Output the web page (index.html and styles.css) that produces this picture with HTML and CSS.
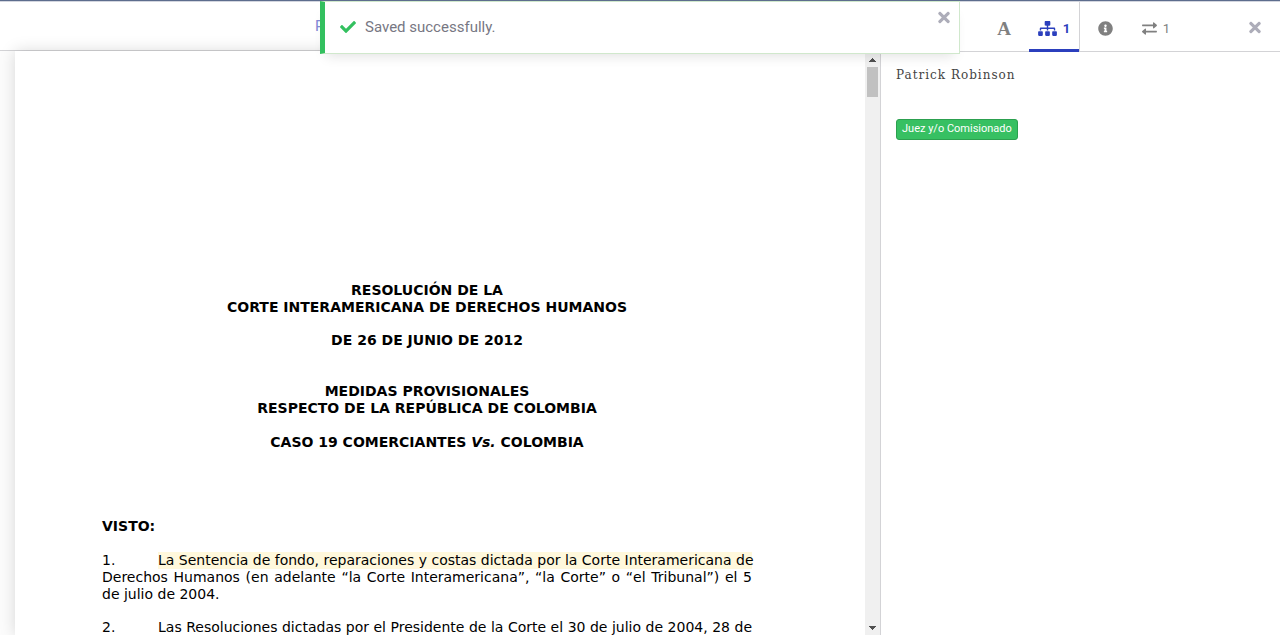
FILE: index.html
```
<!DOCTYPE html>
<html lang="es">
<head>
<meta charset="utf-8">
<title>Documento</title>
<link rel="stylesheet" href="styles.css">
</head>
<body>
<div class="app">
  <div class="topbar"></div>
  <div class="viewer">
    <section class="main">
      <header class="main-header"><a class="main-link" href="#">P</a></header>
      <div class="scroller">
        <article class="page">
          <h1 class="title">RESOLUCIÓN DE LA<br>CORTE INTERAMERICANA DE DERECHOS HUMANOS</h1>
          <p class="date">DE 26 DE JUNIO DE 2012</p>
          <h2 class="subject">MEDIDAS PROVISIONALES<br>RESPECTO DE LA REPÚBLICA DE COLOMBIA</h2>
          <p class="case">CASO 19 COMERCIANTES <em>Vs.</em> COLOMBIA</p>
          <h3 class="section">VISTO:</h3>
          <p class="para">
            <span class="line first"><span class="num">1.</span><mark class="ref">La Sentencia de fondo, reparaciones y costas dictada por la Corte Interamericana de</mark></span>
            <span class="line">Derechos Humanos (en adelante “la Corte Interamericana”, “la Corte” o “el Tribunal”) el 5</span>
            <span class="line last">de julio de 2004.</span>
          </p>
          <p class="para">
            <span class="line first"><span class="num">2.</span><span class="fill">Las Resoluciones dictadas por el Presidente de la Corte el 30 de julio de 2004, 28 de</span></span>
          </p>
        </article>
        <div class="scrollbar" aria-hidden="true">
          <svg class="arrow" viewBox="0 0 15 13"><path d="M4 9h7v-1h-1v-1h-1v-1h-1v-1h-1v1h-1v1h-1v1h-1z"/></svg>
          <div class="thumb"></div>
          <div class="track"></div>
          <svg class="arrow" viewBox="0 0 15 13"><path d="M4 4h7v1h-1v1h-1v1h-1v1h-1v-1h-1v-1h-1v-1h-1z"/></svg>
        </div>
      </div>
    </section>
    <aside class="side">
      <nav class="tabs">
        <button class="tab letter" type="button">A</button>
        <button class="tab active" type="button" aria-label="Conexiones 1">
          <svg width="19" height="15" viewBox="0 0 640 512" fill="currentColor"><path d="M128 352H32c-17.700 0-32 14.300-32 32v96c0 17.700 14.300 32 32 32h96c17.700 0 32-14.300 32-32v-96c0-17.700-14.300-32-32-32zm-24-80h192v48h48v-48h192v48h48v-57.600c0-21.200-17.200-38.400-38.400-38.400H344v-64h40c17.700 0 32-14.300 32-32V32c0-17.700-14.300-32-32-32H256c-17.700 0-32 14.300-32 32v96c0 17.700 14.300 32 32 32h40v64H94.400C73.200 224 56 241.200 56 262.400V320h48v-48zm264 80h-96c-17.700 0-32 14.300-32 32v96c0 17.700 14.300 32 32 32h96c17.700 0 32-14.300 32-32v-96c0-17.700-14.300-32-32-32zm240 0h-96c-17.700 0-32 14.300-32 32v96c0 17.700 14.300 32 32 32h96c17.700 0 32-14.300 32-32v-96c0-17.700-14.300-32-32-32z"/></svg>
          <span>1</span>
        </button>
        <button class="tab info" type="button" aria-label="Información">
          <svg width="15" height="15" viewBox="0 0 512 512" fill="currentColor"><path d="M256 8C119 8 8 119 8 256s111 248 248 248 248-111 248-248S393 8 256 8zm0 110c23 0 42 19 42 42s-19 42-42 42-42-19-42-42 19-42 42-42zm56 254c0 7-5 12-12 12h-88c-7 0-12-5-12-12v-24c0-7 5-12 12-12h12v-64h-12c-7 0-12-5-12-12v-24c0-7 5-12 12-12h64c7 0 12 5 12 12v100h12c7 0 12 5 12 12v24z"/></svg>
        </button>
        <button class="tab relations" type="button" aria-label="Relaciones 1">
          <svg width="15" height="13" viewBox="0 0 15 13" fill="currentColor"><path d="M.5 2.500H11V1c0-.7.600-.9 1-.5l2.700 2.300c.4.400.4.700 0 1.100L12 6.200c-.4.400-1 .2-1-.5V4.300H.5C-.1 4.300-.1 2.500.5 2.500zM14.500 8.700H4V7.300c0-.7-.6-.9-1-.5L.3 9.100c-.4.400-.4.700 0 1.100L3 12.500c.4.400 1 .2 1-.5v-1.500h10.500c.6 0 .6-1.800 0-1.800z"/></svg>
          <span>1</span>
        </button>
        <button class="close" type="button" aria-label="Cerrar">
          <svg width="12" height="17" viewBox="0 0 352 512" fill="currentColor"><path d="M242.700 256l100.100-100.100c12.300-12.300 12.300-32.200 0-44.500l-22.200-22.200c-12.300-12.300-32.200-12.300-44.500 0L176 189.300 75.900 89.200c-12.300-12.300-32.200-12.300-44.500 0L9.200 111.400c-12.300 12.300-12.300 32.200 0 44.500L109.300 256 9.200 356.100c-12.300 12.300-12.300 32.200 0 44.500l22.200 22.200c12.300 12.300 32.200 12.300 44.500 0L176 322.700l100.100 100.100c12.300 12.300 32.200 12.300 44.500 0l22.200-22.200c12.300-12.300 12.300-32.200 0-44.500z"/></svg>
        </button>
      </nav>
      <div class="item">
        <div class="item-name">Patrick Robinson</div>
        <span class="badge">Juez y/o Comisionado</span>
      </div>
    </aside>
  </div>
  <div class="toast" role="status">
    <svg width="16" height="16" viewBox="0 0 512 512" fill="#33c05f"><path d="M173.900 439.400L7.500 273c-10-10-10-26.200 0-36.200l36.200-36.200c10-10 26.200-10 36.200 0L192 312.700 432.100 72.600c10-10 26.200-10 36.200 0l36.200 36.200c10 10 10 26.200 0 36.200L210.100 439.400c-10 10-26.200 10-36.200 0z"/></svg>
    <span class="toast-text">Saved successfully.</span>
    <button class="toast-close" type="button" aria-label="Close">
      <svg width="12" height="17" viewBox="0 0 352 512" fill="currentColor"><path d="M242.700 256l100.100-100.100c12.300-12.300 12.300-32.200 0-44.500l-22.200-22.200c-12.300-12.300-32.200-12.300-44.500 0L176 189.300 75.900 89.200c-12.300-12.300-32.200-12.300-44.500 0L9.200 111.400c-12.300 12.300-12.300 32.200 0 44.500L109.300 256 9.200 356.100c-12.300 12.300-12.300 32.200 0 44.500l22.200 22.200c12.300 12.300 32.200 12.300 44.500 0L176 322.700l100.100 100.100c12.300 12.300 32.200 12.300 44.500 0l22.200-22.200c12.300-12.300 12.300-32.200 0-44.500z"/></svg>
    </button>
  </div>
</div>
</body>
</html>
```
FILE: styles.css
```
* { box-sizing: border-box; }
body { margin: 0; font-family: Roboto, "Liberation Sans", sans-serif; background: #fff; }
button { border: 0; background: none; padding: 0; font: inherit; color: inherit; cursor: pointer; }
svg { display: block; flex: none; }

.app { height: 100vh; display: flex; flex-direction: column; position: relative; overflow: hidden; }
.topbar { flex: none; height: 2px; background: #5d6d8d; border-bottom: 1px solid #d3d6df; }
.viewer { flex: 1; min-height: 0; display: flex; }

.main { flex: 1; min-width: 0; display: flex; flex-direction: column; }
.main-header { flex: none; height: 49px; padding-left: 315px; display: flex; align-items: center; border-bottom: 1px solid #d3d3d6; }
.main-link { font-size: 15px; color: #8389d6; text-decoration: none; }
.scroller { flex: 1; min-height: 0; display: flex; background: #fcfcfc; padding-left: 15px; }
.page { flex: 1; min-width: 0; overflow: hidden; background: #fff; box-shadow: 0 0 15px rgba(0, 0, 0, .15); padding: 231px 113px 0 87px; font: 14px/17px Verdana, "DejaVu Sans", sans-serif; color: #000; }
.page h1, .page h2, .page h3, .page p { margin: 0; font-size: 14px; }
.title, .subject, .date, .case { text-align: center; font-weight: bold; }
.page .date { margin-top: 16px; }
.page .subject { margin-top: 34px; }
.page .case { margin-top: 17px; }
.page .section { margin-top: 67px; }
.page .para { margin-top: 17px; }
.page .para + .para { margin-top: 16px; }
.line { display: block; text-align-last: justify; white-space: nowrap; }
.line.last { text-align-last: left; }
.line.first { display: flex; }
.num { flex: none; width: 56px; text-align-last: left; }
.ref, .fill { flex: 1; min-width: 0; color: inherit; }
.ref { background: #fff8dc; }

.scrollbar { flex: none; width: 15px; display: flex; flex-direction: column; background: #f0f0f0; z-index: 1; padding-top: 2px; }
.arrow { width: 15px; height: 13px; fill: #505050; }
.thumb { height: 30px; margin: 1px 2px 0; background: #c1c1c1; }
.track { flex: 1; }

.side { flex: none; width: 400px; border-left: 1px solid #d3d3d6; z-index: 1; background: #fff; }
.tabs { height: 50px; display: flex; border-bottom: 1px solid #d3d3d6; color: #808080; font-size: 13px; padding-left: 98px; }
.tab { display: flex; align-items: center; justify-content: center; gap: 6px; width: 50px; height: 50px; padding-top: 3px; }
.tab.letter { font: bold 19px "Liberation Serif", serif; }
.tab.active { color: #2b3fbd; font-weight: bold; border-bottom: 3px solid #2b3fbd; padding-top: 6px; box-shadow: 1px 0 #d3d3d6; }
.tab.info { width: 52px; }
.close { margin-left: auto; padding: 2px 19px 0 0; color: #adadb9; }
.item { padding: 14px 15px; }
.item-name { font: 12px/18px "Roboto Slab", "DejaVu Serif", serif; letter-spacing: 1px; color: #444; }
.badge { display: inline-block; margin-top: 35px; padding: 0 5px 1px; border: 1px solid #2ca04f; border-radius: 3px; background: #37c062; color: #fff; font-size: 11px; line-height: 18px; }

.toast { position: absolute; top: 1px; left: 25%; z-index: 2; width: 50%; height: 53px; display: flex; align-items: center; gap: 9px; padding: 0 9px 2px 15px; background: #fff; border: 1px solid #d0e8cc; border-left: 5px solid #33c05f; box-shadow: 0 8px 12px -6px rgba(0, 0, 0, .12); color: #777783; font-size: 15px; }
.toast-close { margin-left: auto; align-self: flex-start; padding-top: 7px; color: #adadb9; }
```
